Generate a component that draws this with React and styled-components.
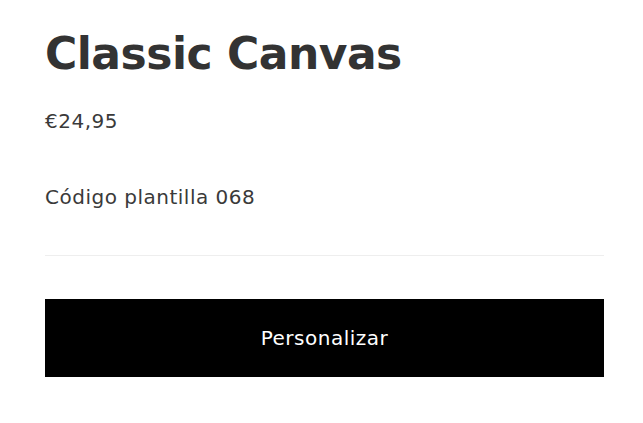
import styled, { createGlobalStyle } from "styled-components";

const GlobalStyle = createGlobalStyle`
  html, body {
    margin: 0;
    padding: 0;
    background: #fff;
  }
  body {
    font-family: "DejaVu Sans", "Noto Sans", sans-serif;
    color: #333;
  }
`;

function App() {
  return (
    <>
      <GlobalStyle />
      <Product>
        <Title>Classic Canvas</Title>
        <Price>€24,95</Price>
        <Code>Código plantilla 068</Code>
        <Divider />
        <Button>Personalizar</Button>
      </Product>
    </>
  );
}

const Product = styled.section`
  display: flex;
  flex-direction: column;
  padding: 24px 39px 0 45px;
`;

const Title = styled.h1`
  margin: 0;
  font-size: 44px;
  font-weight: 700;
  line-height: 60px;
  color: #333;
  letter-spacing: -0.5px;
`;

const Price = styled.div`
  margin-top: 25px;
  font-size: 20px;
  font-weight: 400;
  line-height: 24px;
  letter-spacing: 0.5px;
  color: #3a3a3a;
`;

const Code = styled.div`
  margin-top: 52px;
  font-size: 20px;
  font-weight: 400;
  line-height: 24px;
  letter-spacing: 0.5px;
  color: #3a3a3a;
`;

const Divider = styled.hr`
  margin: 46px 0 0;
  border: none;
  border-top: 1px solid #eee;
`;

const Button = styled.button`
  margin-top: 43px;
  height: 78px;
  border: none;
  background: #000;
  color: #fff;
  font-family: inherit;
  font-size: 20px;
  font-weight: 400;
  letter-spacing: 0.5px;
  cursor: pointer;
`;

export default App;
